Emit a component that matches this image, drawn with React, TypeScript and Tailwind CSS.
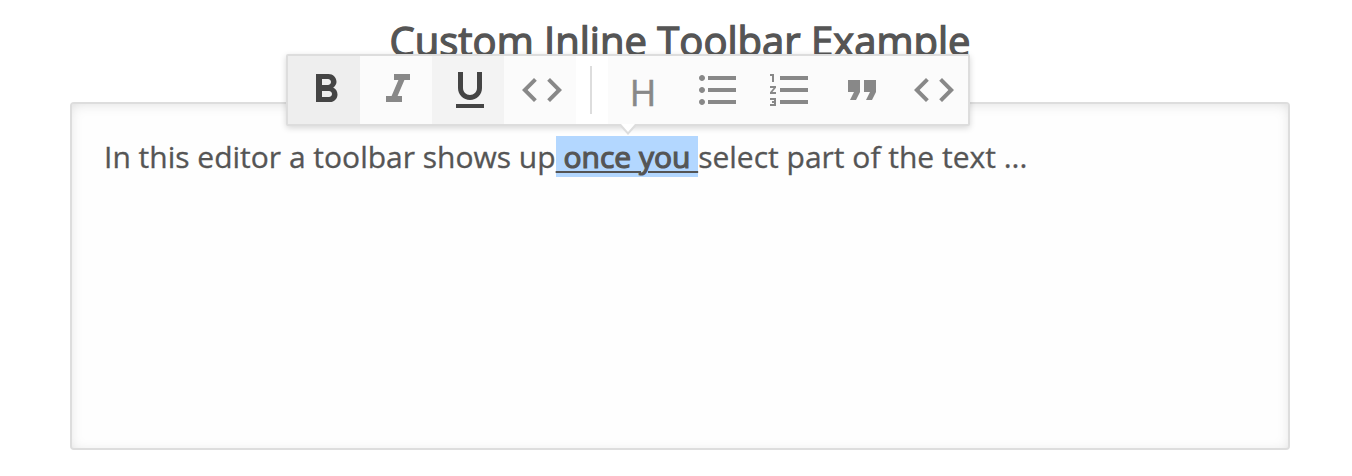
import type { ReactNode } from 'react';

const BOLD =
  'M15.6 10.79c.97-.67 1.65-1.77 1.65-2.79 0-2.26-1.75-4-4-4H7v14h7.04c2.09 0 3.71-1.7 3.71-3.79 0-1.52-.86-2.82-2.15-3.42zM10 6.5h3c.83 0 1.5.67 1.5 1.5s-.67 1.5-1.5 1.5h-3v-3zm3.5 9H10v-3h3.5c.83 0 1.5.67 1.5 1.5s-.67 1.5-1.5 1.5z';
const ITALIC = 'M10 4v3h2.21l-3.42 8H6v3h8v-3h-2.21l3.42-8H18V4z';
const UNDERLINE =
  'M12 17c3.31 0 6-2.69 6-6V3h-2.5v8c0 1.93-1.57 3.5-3.5 3.5S8.5 12.93 8.5 11V3H6v8c0 3.31 2.69 6 6 6zm-7 2v2h14v-2H5z';
const CODE =
  'M9.4 16.6L4.8 12l4.6-4.6L8 6l-6 6 6 6 1.4-1.4zm5.2 0l4.6-4.6-4.6-4.6L16 6l6 6-6 6-1.4-1.4z';
const BULLETS =
  'M4 10.5c-.83 0-1.5.67-1.5 1.5s.67 1.5 1.5 1.5 1.5-.67 1.5-1.5-.67-1.5-1.5-1.5zm0-6c-.83 0-1.5.67-1.5 1.5S3.17 7.5 4 7.5 5.5 6.83 5.5 6 4.83 4.5 4 4.5zm0 12c-.83 0-1.5.68-1.5 1.5s.68 1.5 1.5 1.5 1.5-.68 1.5-1.5-.67-1.5-1.5-1.5zM7 19h14v-2H7v2zm0-6h14v-2H7v2zm0-8v2h14V5H7z';
const NUMBERS =
  'M2 17h2v.5H3v1h1v.5H2v1h3v-4H2v1zm1-9h1V4H2v1h1v3zm-1 3h1.8L2 13.1v.9h3v-1H3.2L5 10.9V10H2v1zm5-6v2h14V5H7zm0 14h14v-2H7v2zm0-6h14v-2H7v2z';
const QUOTE = 'M6 17h3l2-4V7H5v6h3zm8 0h3l2-4V7h-6v6h3z';

function Icon({ d }: { d: string }) {
  return (
    <svg viewBox="0 0 24 24" className="size-12 fill-current">
      <path d={d} />
    </svg>
  );
}

function ToolButton({ tone = 'bg-[#fbfbfb] text-[#888]', children }: { tone?: string; children: ReactNode }) {
  return <button className={`flex h-[68px] w-[72px] shrink-0 items-start pt-2.5 pl-3.5 ${tone}`}>{children}</button>;
}

function Toolbar() {
  return (
    <div className="absolute top-[54px] left-[286px] flex rounded-xs border-2 border-[#ddd] bg-white shadow-[0_2px_6px_0_rgba(0,0,0,0.16)]">
      <ToolButton tone="bg-[#eee] text-[#444]"><Icon d={BOLD} /></ToolButton>
      <ToolButton><Icon d={ITALIC} /></ToolButton>
      <ToolButton tone="bg-[#f3f3f3] text-[#444]"><Icon d={UNDERLINE} /></ToolButton>
      <ToolButton><Icon d={CODE} /></ToolButton>
      <div className="mt-2.5 mr-4 ml-3.5 h-12 w-0.5 bg-[#ddd]" />
      <ToolButton>
        <span className="w-[42px] text-center font-['Open_Sans',sans-serif] text-[36px] leading-[54px] [-webkit-text-stroke:0.6px_#888]">H</span>
      </ToolButton>
      <ToolButton><Icon d={BULLETS} /></ToolButton>
      <ToolButton><Icon d={NUMBERS} /></ToolButton>
      <ToolButton><Icon d={QUOTE} /></ToolButton>
      <ToolButton><Icon d={CODE} /></ToolButton>
      <svg viewBox="0 0 20 12" className="absolute top-[68px] left-[330px] h-3 w-5">
        <path d="M0 0h20L10 11z" fill="#ddd" />
        <path d="M3 0h14L10 8z" fill="#fff" />
      </svg>
    </div>
  );
}

export default function App() {
  return (
    <main className="relative h-[476px] w-[1352px] overflow-hidden bg-white px-[70px] font-['Open_Sans',sans-serif] text-[#555]">
      <h1 className="h-[102px] pt-[13px] pl-[8px] text-center text-[40px] leading-[56px] font-normal whitespace-nowrap [-webkit-text-stroke:1.3px_#555]">
        Custom Inline Toolbar Example
      </h1>
      <section className="h-[348px] w-[1220px] rounded-sm border-2 border-[#ddd] bg-[#fefefe] px-8 pt-8 shadow-[inset_0_2px_16px_-6px_rgba(0,0,0,0.22)]">
        <p className="text-[30px] leading-[42px] whitespace-pre [-webkit-text-stroke:0.3px_#555]">
          In this editor a toolbar shows up
          <span className="bg-[#b3d7ff] underline decoration-2 underline-offset-[3px] [-webkit-text-stroke:1.2px_#555]"> once you </span>
          select part of the text ...
        </p>
      </section>
      <Toolbar />
    </main>
  );
}
